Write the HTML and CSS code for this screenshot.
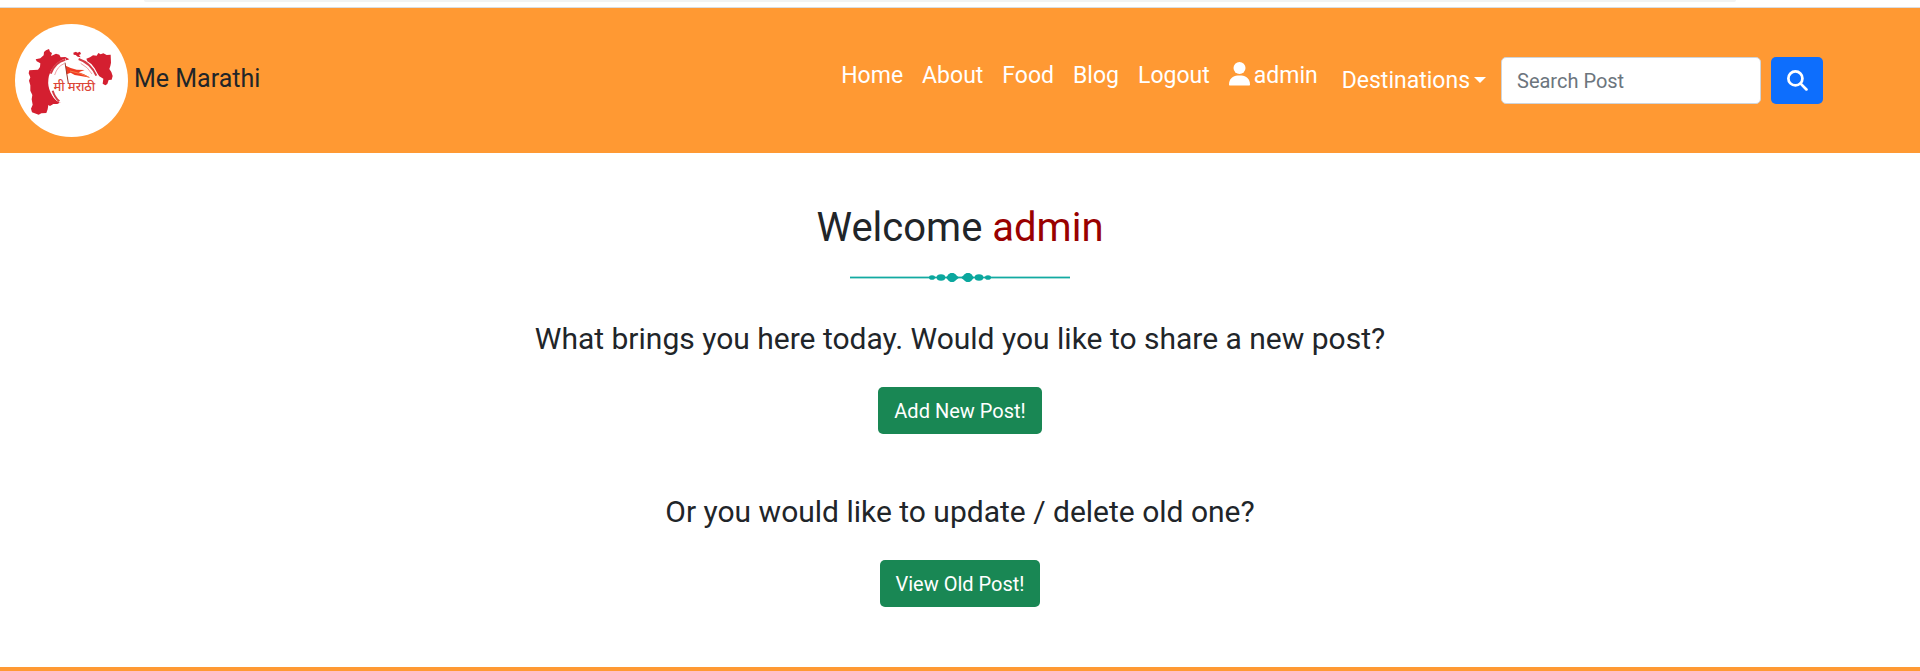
FILE: index.html
```html
<!DOCTYPE html>
<html lang="en">
<head>
<meta charset="utf-8">
<meta name="viewport" content="width=device-width, initial-scale=1">
<title>Me Marathi</title>
<link rel="stylesheet" href="styles.css">
</head>
<body>
<div class="top-edge"><div class="top-pill"></div></div>
<header class="navbar">
  <a class="brand" href="#">
    <svg class="brand-logo" viewBox="15 12 339 339" role="img" aria-label="Me Marathi logo">
      <circle cx="184.500" cy="181.500" r="169.500" fill="#fff"/>
      <g fill="#d41f30">
        <path d="M102 96L108 91L117 87L120 95L126 99L123 108L138 101L148 104L152 112L166 111L178 118L160 124L145 132L130 146L121 164L117 182L120 202L124 216L130 232L140 242L152 247L142 252L130 252L120 258L115 255L113 268L109 279L94 280L86 284L74 280L66 277L63 266L68 254L65 238L67 225L61 212L61 196L57 182L61 172L56 160L58 151L84 149L90 141L91 130L80 124L77 118L91 115L101 106Z"/>
        <path d="M190 98L198 95L202 98L210 95L213 102L207 105L212 112L203 110L197 105L191 104Z"/>
        <path d="M229 116L240 112L249 106L260 107L265 99L272 103L280 100L290 105L302 104L303 128L301 138L298 147L304 156L308 168L305 179L296 180L292 192L286 196L278 191L280 176L268 169L262 160L254 145L244 132L232 124Z"/>
      </g>
      <g fill="none" stroke="#fff" stroke-width="7">
        <path d="M168 119a70 70 0 0 0-16 127"/>
        <path d="M206 116q40 14 54 52"/>
      </g>
      <g fill="none" stroke="#d43b45" stroke-width="6">
        <path d="M166 119q-32 8-44 42M128 212q6 20 20 32M206 117q36 12 53 50"/>
      </g>
      <path fill="none" stroke="#f1a2a4" stroke-width="3" d="M162 131q-20 8-28 34M212 130q22 11 34 32"/>
      <path fill="#ef3b22" d="M167 137L182 144L200 149L224 150L206 157L222 163L241 173L208 167L194 165L182 158L170 163Z"/>
      <path fill="none" stroke="#f57c48" stroke-width="3" d="M180 153L208 160L236 171"/>
      <path fill="none" stroke="#9b3428" stroke-width="3" d="M165 128l10 62"/>
      <text class="logo-text" x="193" y="213">मी मराठी</text>
    </svg>
    <span class="brand-name">Me Marathi</span>
  </a>
  <div class="nav-side">
    <nav class="links" aria-label="Main">
      <a href="#">Home</a>
      <a href="#">About</a>
      <a href="#">Food</a>
      <a href="#">Blog</a>
      <a href="#">Logout</a>
      <a class="user-link" href="#"><svg class="user-icon" viewBox="0 0 21 24" aria-hidden="true"><circle cx="10.500" cy="6" r="6"/><path d="M0 22.500C0 17 4 13.500 8.500 13.500h4C17 13.500 21 17 21 22.500c0 .6-.4 1-1 1H1c-.6 0-1-.4-1-1z"/></svg>admin</a>
    </nav>
    <button class="destinations" type="button" aria-haspopup="true">Destinations<span class="caret"></span></button>
    <form class="search">
      <input class="search-input" type="search" placeholder="Search Post" aria-label="Search Post">
      <button class="search-button" type="button" aria-label="Search"><svg class="search-icon" viewBox="0 0 20 20" aria-hidden="true"><circle cx="8" cy="8" r="6.700"/><path d="M13 13l5.500 5.500"/></svg></button>
    </form>
  </div>
</header>
<main class="content">
  <h1 class="welcome">Welcome <span class="user-name">admin</span></h1>
  <svg class="divider" viewBox="0 0 220 14" aria-hidden="true">
    <path stroke="#a5deda" stroke-width="3" d="M0 7.500h220"/>
    <path stroke="#12aaa2" stroke-width="1" d="M0 7.500h220"/>
    <g fill="#0ba79e">
      <ellipse cx="82" cy="7.500" rx="3" ry="2.300"/><ellipse cx="91" cy="7.500" rx="4.300" ry="3.200"/>
      <path d="M96 7.500q1-1 2-2.500 2-2 4-2t4 2q2 1.500 3 2.500-1 1-3 2.500-2 2-4 2t-4-2q-1-1.500-2-2.500z"/>
      <circle cx="102" cy="7.500" r="4.500"/><circle cx="118" cy="7.500" r="4.500"/>
      <path d="M124 7.500q-1-1-2-2.500-2-2-4-2t-4 2q-2 1.500-3 2.500 1 1 3 2.500 2 2 4 2t4-2q1-1.500 2-2.500z"/>
      <ellipse cx="129" cy="7.500" rx="4.300" ry="3.200"/><ellipse cx="138" cy="7.500" rx="3" ry="2.300"/>
    </g>
  </svg>
  <section class="prompt">
    <h2>What brings you here today. Would you like to share a new post?</h2>
    <a class="action" href="#">Add New Post!</a>
  </section>
  <section class="prompt">
    <h2>Or you would like to update / delete old one?</h2>
    <a class="action" href="#">View Old Post!</a>
  </section>
</main>
<footer class="footer"></footer>
</body>
</html>
```
FILE: styles.css
```css
* { box-sizing: border-box; }
body {
  margin: 0;
  background: #fff;
  color: #212529;
  font-family: Roboto, "Liberation Sans", sans-serif;
  font-size: 20px;
  line-height: 30px;
}
a { color: inherit; text-decoration: none; }
button, input { font: inherit; }

.top-edge { height: 8px; padding: 0 184px 0 144px; border-bottom: 1px solid #dadce0; }
.top-pill { height: 2px; background: #f1f3f4; border-radius: 0 0 8px 8px; }

.navbar {
  display: flex;
  align-items: center;
  justify-content: space-between;
  padding: 16px 97px 16px 15px;
  background: #ff9933;
}
.brand { display: flex; align-items: center; gap: 6px; font-size: 25px; }
.brand-logo { width: 113px; height: 113px; }
.brand-name { padding-bottom: 4px; }
.logo-text {
  font-family: "Noto Sans Devanagari", "Noto Sans", sans-serif;
  font-size: 38px;
  font-weight: 500;
  fill: #dc4537;
  text-anchor: middle;
}
.nav-side { display: flex; align-items: center; font-size: 23px; color: #fff; }
.links { display: flex; gap: 19px; padding-bottom: 10px; margin-right: 24px; }
.user-link { display: flex; align-items: center; gap: 4px; }
.user-icon { width: 21px; height: 24px; margin-bottom: 4px; fill: #fff; }
.destinations {
  display: flex;
  align-items: center;
  gap: 4px;
  margin-right: 15px;
  padding: 0;
  border: 0;
  background: none;
  color: #fff;
}
.caret { border: 6px solid transparent; border-top-color: #fff; border-bottom: 0; margin-bottom: 2px; }
.search { display: flex; gap: 10px; }
.search-input {
  width: 260px;
  height: 47px;
  padding: 8px 15px;
  border: 1px solid #ced4da;
  border-radius: 5px;
  background: #fff;
  font-size: 20px;
}
.search-input::placeholder { color: #6c757d; opacity: 1; }
.search-button {
  display: flex;
  align-items: center;
  justify-content: center;
  width: 52px;
  height: 47px;
  padding: 0;
  border: 0;
  border-radius: 5px;
  background: #0d6efd;
}
.search-icon { width: 21px; height: 21px; fill: none; stroke: #fff; stroke-width: 2.6; stroke-linecap: round; }

.content { display: flex; flex-direction: column; align-items: center; padding: 51px 16px 60px; text-align: center; }
.welcome { margin: 0; font-size: 40px; font-weight: 400; line-height: 48px; }
.user-name { color: #990000; }
.divider { width: 220px; height: 14px; margin: 18px 0 37px; }
.prompt + .prompt { margin-top: 60px; }
.prompt h2 { margin: 0 0 30px; font-size: 30px; font-weight: 400; line-height: 36px; }
.action {
  display: inline-block;
  padding: 9px 16px 8px;
  border-radius: 5px;
  background: #198754;
  color: #fff;
  vertical-align: top;
}
.footer { height: 4px; background: #ff9933; }
```
